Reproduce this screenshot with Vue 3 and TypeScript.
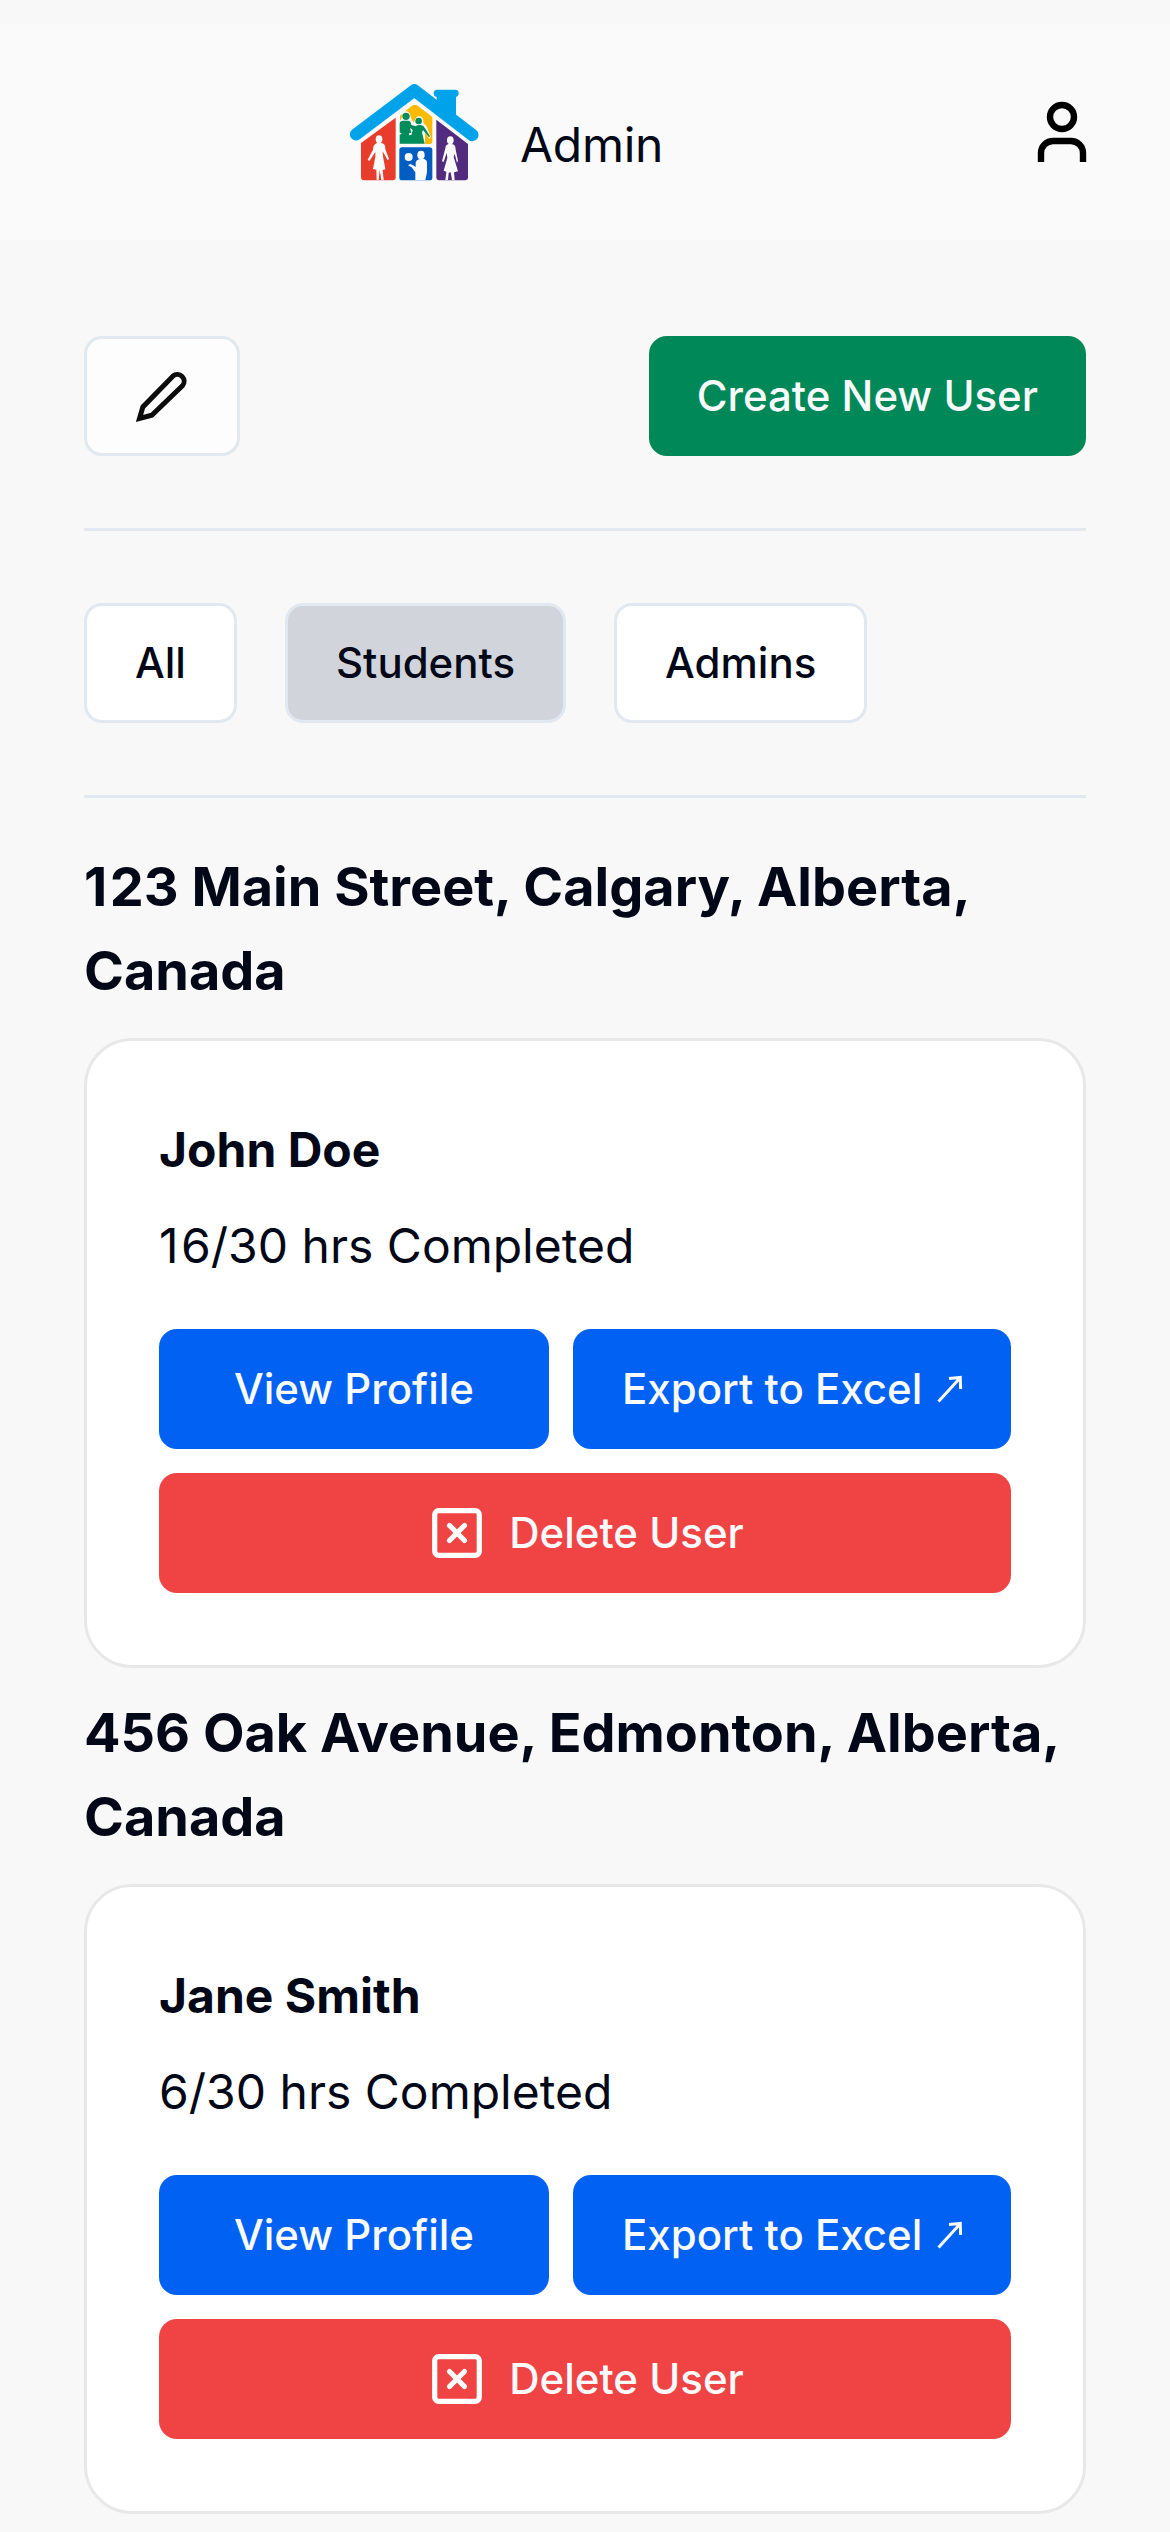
<script setup lang="ts">
import { ref } from 'vue'

interface User {
  address: string
  name: string
  hours: number
}

const tabs = ['All', 'Students', 'Admins']
const activeTab = ref('Students')
const requiredHours = 30

const users: User[] = [
  { address: '123 Main Street, Calgary, Alberta, Canada', name: 'John Doe', hours: 16 },
  { address: '456 Oak Avenue, Edmonton, Alberta, Canada', name: 'Jane Smith', hours: 6 },
]

const startsWithOne = (text: string | number): boolean => String(text).startsWith('1')
</script>

<template>
  <div class="page">
    <header class="header">
      <div class="brand">
        <svg class="logo" viewBox="0 0 510 360" aria-hidden="true">
          <path d="M320 82V64H378V150L320 112Z" fill="#00a2e9" />
          <rect x="311" y="59" width="75" height="22" rx="11" fill="#00a2e9" />
          <path d="M78 193L253 61L427 195" fill="none" stroke="#00a2e9" stroke-width="37" stroke-linecap="round" stroke-linejoin="round" />
          <path d="M197 143V322Q197 331 188 331H102Q93 331 93 322V219Z" fill="#e83c2c" />
          <path d="M319 149L414 222V322Q414 331 405 331H328Q319 331 319 322Z" fill="#522a7e" />
          <path d="M210 137L242 110Q254 99 267 110L307 141V214Q307 222 299 222H210Z" fill="#fbb900" />
          <rect x="208" y="232" width="99" height="99" rx="8" fill="#005ec3" />
          <!-- dancing couple -->
          <path d="M208 151Q216 151 216 134Q219 123 230 124Q241 126 243 145Q246 151 252 158Q255 142 266 138Q281 139 280 158Q287 163 291 172L302 200L298 207L285 187V222H208Z" fill="#fafafa" />
          <circle cx="228" cy="139" r="11" fill="#008c5b" />
          <circle cx="266" cy="153" r="10" fill="#008c5b" />
          <path d="M209 160Q210 152 219 152H235Q244 153 243 164L257 169Q261 164 273 165Q282 167 286 176L300 199L297 202L279 180L276 187L284 221H209V194L215 191L209 187Z" fill="#008c5b" />
          <path d="M240 175L249 178Q253 187 248 194L237 196V190L244 188Z" fill="#fafafa" />
          <path d="M242 173L254 177L251 195L244 196L248 181Z" fill="#008c5b" />
          <!-- woman on the left -->
          <g fill="#fafafa">
            <ellipse cx="147" cy="208" rx="10" ry="12" />
            <path d="M142 218H152L162 222Q167 227 166 238L177 267L173 271L158 244L159 259L166 298L158 300L161 330H154L149 300L146 330H140L139 299L129 297L136 260V246L118 273L113 269L129 239Q128 224 142 218Z" />
            <!-- woman on the right -->
            <ellipse cx="361" cy="211" rx="10" ry="12" />
            <path d="M355 222H365Q377 223 377 239L384 272L381 278L374 251L371 261L384 304L372 307L374 330H366L362 307L356 308L354 330H346L349 305L341 302L352 263L350 249L341 276L336 274L346 235Q346 225 355 222Z" />
            <!-- child with a ball -->
            <circle cx="236" cy="261" r="12" />
            <ellipse cx="273" cy="255" rx="11" ry="13" />
            <path d="M267 268L281 266Q291 269 291 279V306L286 330H256V307L245 292L234 286L241 282L249 286L257 291V278Q258 270 267 268Z" />
          </g>
        </svg>
        <span class="title">Admin</span>
      </div>
      <svg class="account" viewBox="0 0 72 72" aria-hidden="true">
        <path d="M15 66V57A12 12 0 0 1 27 45H45A12 12 0 0 1 57 57V66" />
        <circle cx="36" cy="21" r="12" />
      </svg>
    </header>

    <main class="content">
      <div class="toolbar">
        <button class="btn outline edit" aria-label="Edit">
          <svg class="pencil" viewBox="0 0 60 60" aria-hidden="true">
            <path d="M7.5 52.5L10.9 40.9L40.8 10.2A6.8 6.8 0 0 1 50.4 19.8L19.8 49.2Z" />
          </svg>
        </button>
        <button class="btn green">Create New User</button>
      </div>

      <nav class="tabs">
        <button
          v-for="tab in tabs"
          :key="tab"
          class="btn outline"
          :class="{ active: tab === activeTab }"
          @click="activeTab = tab"
        >{{ tab }}</button>
      </nav>

      <section v-for="user in users" :key="user.name" class="group">
        <h2 :class="{ 'lead-one': startsWithOne(user.address) }">{{ user.address }}</h2>
        <article class="card">
          <h3>{{ user.name }}</h3>
          <p :class="{ 'lead-one': startsWithOne(user.hours) }">{{ user.hours }}/{{ requiredHours }} hrs Completed</p>
          <div class="actions">
            <div class="row">
              <button class="btn blue grow">View Profile</button>
              <button class="btn blue export">
                <span>Export to Excel</span>
                <svg class="arrow" viewBox="0 0 26 28" aria-hidden="true">
                  <path d="M1.5 26.5L23 3M12 3.6L23.3 2.4L23.6 14" />
                </svg>
              </button>
            </div>
            <button class="btn red">
              <svg class="delete" viewBox="0 0 50 50" aria-hidden="true">
                <rect x="2.7" y="2.7" width="44.6" height="44.6" rx="4" />
                <path d="M17.5 17.5L32.5 32.5M32.5 17.5L17.5 32.5" />
              </svg>
              Delete User
            </button>
          </div>
        </article>
      </section>
    </main>
  </div>
</template>

<style>
body {
  background: #f8f8f8;
}
</style>

<style scoped>
.page {
  box-sizing: border-box;
  height: 2532px;
  overflow: hidden;
  padding-top: 24px;
  background: #f8f8f8;
  color: #020817;
  font-family: Inter, "Liberation Sans", sans-serif;
  font-size: 48px;
  line-height: 72px;
}

.header {
  display: flex;
  align-items: center;
  justify-content: space-between;
  box-sizing: border-box;
  height: 216px;
  padding: 0 72px 0 330px;
  background: #fafafa;
}

.brand {
  display: flex;
  align-items: center;
  gap: 20px;
}

.logo {
  width: 170px;
  height: 120px;
  margin-top: -4px;
}

.title {
  margin-top: 25px;
  letter-spacing: -0.3px;
}

.account {
  width: 72px;
  height: 72px;
  flex: none;
  fill: none;
  stroke: #000;
  stroke-width: 6.4;
}

.content {
  padding: 96px 84px 0;
}

.toolbar,
.tabs {
  display: flex;
  padding-bottom: 72px;
  border-bottom: 3px solid #e2e8f0;
}

.toolbar {
  justify-content: space-between;
}

.tabs {
  gap: 48px;
  padding-top: 72px;
  margin-bottom: 48px;
}

.btn {
  display: flex;
  align-items: center;
  justify-content: center;
  box-sizing: border-box;
  height: 120px;
  margin: 0;
  padding: 0 48px;
  border: 0;
  border-radius: 18px;
  color: #f8fafc;
  font: 500 42px/60px Inter, "Liberation Sans", sans-serif;
  white-space: nowrap;
}

.outline {
  border: 3px solid #e2e8f0;
  background: #fff;
  color: #020817;
}

.active {
  background: #d1d5db;
}

.edit {
  width: 156px;
  padding: 0;
  background: #fdfdfd;
}

.pencil {
  width: 60px;
  height: 60px;
  flex: none;
  fill: none;
  stroke: #0c0c0c;
  stroke-width: 5;
}

.green {
  background: #008858;
}

.blue {
  background: #0061f2;
}

.red {
  background: #f04444;
}

.grow {
  flex: 1;
}

.export {
  width: 438px;
  padding-left: 49px;
  justify-content: space-between;
}

.arrow {
  width: 26px;
  height: 28px;
  flex: none;
  fill: none;
  stroke: currentColor;
  stroke-width: 3;
}

.group {
  margin-bottom: 24px;
}

h2,
h3,
p {
  margin: 0;
}

h2 {
  margin-top: -1px;
  margin-bottom: 25px;
  font-size: 54px;
  font-weight: 700;
  line-height: 84px;
}

.lead-one::first-letter {
  letter-spacing: 2.5px;
}

.card {
  padding: 72px;
  border: 3px solid #e8e8e8;
  border-radius: 48px;
  background: #fff;
}

h3 {
  padding-top: 1px;
  margin-bottom: 24px;
  font-size: 48px;
  font-weight: 700;
  line-height: 72px;
}

p {
  margin-bottom: 47px;
}

.actions {
  display: flex;
  flex-direction: column;
  gap: 24px;
}

.row {
  display: flex;
  gap: 24px;
}

.delete {
  width: 50px;
  height: 50px;
  flex: none;
  margin-left: 6px;
  margin-right: 27px;
  fill: none;
  stroke: #fff;
  stroke-width: 5.2;
  stroke-linecap: round;
}
</style>
